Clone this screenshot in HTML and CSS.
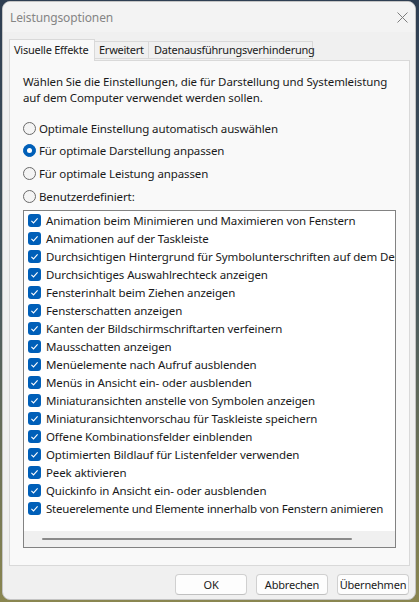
FILE: index.html
```html
<!DOCTYPE html>
<html lang="de">
<head>
<meta charset="utf-8">
<title>Leistungsoptionen</title>
<link rel="stylesheet" href="styles.css">
</head>
<body>
<div class="window">
  <div class="titlebar">
    <span class="title">Leistungsoptionen</span>
    <svg class="close" width="11" height="11" viewBox="0 0 11 11"><path d="M0.5 0.5 L10.5 10.5 M10.5 0.5 L0.5 10.5" stroke="#7d7d7d" stroke-width="1" fill="none"/></svg>
  </div>
  <div class="tabs">
    <div class="tab active">Visuelle Effekte</div>
    <div class="tab">Erweitert</div>
    <div class="tab">Datenausführungsverhinderung</div>
  </div>
  <div class="panel">
    <p class="desc">Wählen Sie die Einstellungen, die für Darstellung und Systemleistung<br>auf dem Computer verwendet werden sollen.</p>
    <div class="radios">
      <div class="radio-row"><span class="radio"></span>Optimale Einstellung automatisch auswählen</div>
      <div class="radio-row"><span class="radio on"></span>Für optimale Darstellung anpassen</div>
      <div class="radio-row"><span class="radio"></span>Für optimale Leistung anpassen</div>
      <div class="radio-row"><span class="radio"></span>Benutzerdefiniert:</div>
    </div>
    <div class="list">
      <div class="rows">
        <div class="row"><span class="cb"><svg width="13" height="13" viewBox="0 0 13 13"><path d="M3.4 6.9 L5.5 8.9 L9.6 4.4" stroke="#fff" stroke-width="1.1" fill="none"/></svg></span>Animation beim Minimieren und Maximieren von Fenstern</div>
        <div class="row"><span class="cb"><svg width="13" height="13" viewBox="0 0 13 13"><path d="M3.4 6.9 L5.5 8.9 L9.6 4.4" stroke="#fff" stroke-width="1.1" fill="none"/></svg></span>Animationen auf der Taskleiste</div>
        <div class="row"><span class="cb"><svg width="13" height="13" viewBox="0 0 13 13"><path d="M3.4 6.9 L5.5 8.9 L9.6 4.4" stroke="#fff" stroke-width="1.1" fill="none"/></svg></span>Durchsichtigen Hintergrund für Symbolunterschriften auf dem Desktop verwenden</div>
        <div class="row"><span class="cb"><svg width="13" height="13" viewBox="0 0 13 13"><path d="M3.4 6.9 L5.5 8.9 L9.6 4.4" stroke="#fff" stroke-width="1.1" fill="none"/></svg></span>Durchsichtiges Auswahlrechteck anzeigen</div>
        <div class="row"><span class="cb"><svg width="13" height="13" viewBox="0 0 13 13"><path d="M3.4 6.9 L5.5 8.9 L9.6 4.4" stroke="#fff" stroke-width="1.1" fill="none"/></svg></span>Fensterinhalt beim Ziehen anzeigen</div>
        <div class="row"><span class="cb"><svg width="13" height="13" viewBox="0 0 13 13"><path d="M3.4 6.9 L5.5 8.9 L9.6 4.4" stroke="#fff" stroke-width="1.1" fill="none"/></svg></span>Fensterschatten anzeigen</div>
        <div class="row"><span class="cb"><svg width="13" height="13" viewBox="0 0 13 13"><path d="M3.4 6.9 L5.5 8.9 L9.6 4.4" stroke="#fff" stroke-width="1.1" fill="none"/></svg></span>Kanten der Bildschirmschriftarten verfeinern</div>
        <div class="row"><span class="cb"><svg width="13" height="13" viewBox="0 0 13 13"><path d="M3.4 6.9 L5.5 8.9 L9.6 4.4" stroke="#fff" stroke-width="1.1" fill="none"/></svg></span>Mausschatten anzeigen</div>
        <div class="row"><span class="cb"><svg width="13" height="13" viewBox="0 0 13 13"><path d="M3.4 6.9 L5.5 8.9 L9.6 4.4" stroke="#fff" stroke-width="1.1" fill="none"/></svg></span>Menüelemente nach Aufruf ausblenden</div>
        <div class="row"><span class="cb"><svg width="13" height="13" viewBox="0 0 13 13"><path d="M3.4 6.9 L5.5 8.9 L9.6 4.4" stroke="#fff" stroke-width="1.1" fill="none"/></svg></span>Menüs in Ansicht ein- oder ausblenden</div>
        <div class="row"><span class="cb"><svg width="13" height="13" viewBox="0 0 13 13"><path d="M3.4 6.9 L5.5 8.9 L9.6 4.4" stroke="#fff" stroke-width="1.1" fill="none"/></svg></span>Miniaturansichten anstelle von Symbolen anzeigen</div>
        <div class="row"><span class="cb"><svg width="13" height="13" viewBox="0 0 13 13"><path d="M3.4 6.9 L5.5 8.9 L9.6 4.4" stroke="#fff" stroke-width="1.1" fill="none"/></svg></span>Miniaturansichtenvorschau für Taskleiste speichern</div>
        <div class="row"><span class="cb"><svg width="13" height="13" viewBox="0 0 13 13"><path d="M3.4 6.9 L5.5 8.9 L9.6 4.4" stroke="#fff" stroke-width="1.1" fill="none"/></svg></span>Offene Kombinationsfelder einblenden</div>
        <div class="row"><span class="cb"><svg width="13" height="13" viewBox="0 0 13 13"><path d="M3.4 6.9 L5.5 8.9 L9.6 4.4" stroke="#fff" stroke-width="1.1" fill="none"/></svg></span>Optimierten Bildlauf für Listenfelder verwenden</div>
        <div class="row"><span class="cb"><svg width="13" height="13" viewBox="0 0 13 13"><path d="M3.4 6.9 L5.5 8.9 L9.6 4.4" stroke="#fff" stroke-width="1.1" fill="none"/></svg></span>Peek aktivieren</div>
        <div class="row"><span class="cb"><svg width="13" height="13" viewBox="0 0 13 13"><path d="M3.4 6.9 L5.5 8.9 L9.6 4.4" stroke="#fff" stroke-width="1.1" fill="none"/></svg></span>Quickinfo in Ansicht ein- oder ausblenden</div>
        <div class="row"><span class="cb"><svg width="13" height="13" viewBox="0 0 13 13"><path d="M3.4 6.9 L5.5 8.9 L9.6 4.4" stroke="#fff" stroke-width="1.1" fill="none"/></svg></span>Steuerelemente und Elemente innerhalb von Fenstern animieren</div>
      </div>
      <div class="hscroll"><div class="thumb"></div></div>
    </div>
  </div>
  <div class="footer">
    <button class="btn">OK</button>
    <button class="btn">Abbrechen</button>
    <button class="btn">Übernehmen</button>
  </div>
</div>
</body>
</html>
```

FILE: styles.css
```css
* { box-sizing: border-box; }
html, body { margin: 0; padding: 0; }
body {
  width: 419px;
  height: 602px;
  overflow: hidden;
  background: linear-gradient(180deg, #2e3e52 0%, #4a5a5e 50%, #8a8650 100%);
  padding: 1px 3px 2px 2px;
  font-family: "Noto Sans", "Liberation Sans", sans-serif;
  font-size: 11.5px;
  letter-spacing: -0.12px;
  color: #1a1a1a;
}
.window {
  width: 414px;
  height: 599px;
  background: #f0f0f0;
  border: 1px solid #c4c4c4;
  border-radius: 8px;
  display: flex;
  flex-direction: column;
  overflow: hidden;
}
.titlebar {
  height: 30px;
  flex: none;
  display: flex;
  align-items: center;
  justify-content: space-between;
  padding: 0 7px 0 7px;
  background: #f3f3f3;
}
.title { color: #858585; font-size: 12px; }
.close { display: block; }
.tabs {
  margin-top: 6px;
  padding-left: 6px;
  display: flex;
  align-items: flex-end;
  height: 22px;
  position: relative;
  z-index: 1;
}
.tab {
  height: 18px;
  line-height: 16px;
  padding: 0 4px;
  border: 1px solid #d9d9d9;
  border-left: none;
  background: #f0f0f0;
  margin-bottom: 1px;
  white-space: nowrap;
  font-size: 11px;
  letter-spacing: -0.25px;
}
.tab.active {
  height: 22px;
  line-height: 20px;
  background: #f9f9f9;
  border-left: 1px solid #d9d9d9;
  border-bottom: none;
  margin-bottom: -1px;
  width: 86px;
  padding: 0 0 0 4px;
}
.tab:nth-child(2) { width: 54px; }
.tab:nth-child(3) { width: 164px; padding-left: 5px; }
.panel {
  margin: 0 5px 0 6px;
  height: 506px;
  background: #f9f9f9;
  border: 1px solid #d9d9d9;
  padding: 13px 13px 0 13px;
}
.desc {
  margin: 0;
  line-height: 16px;
  white-space: nowrap;
}
.radios { margin-top: 11px; }
.radio-row {
  height: 22.6px;
  display: flex;
  align-items: center;
  white-space: nowrap;
}
.radio {
  width: 13px;
  height: 13px;
  border-radius: 50%;
  border: 1px solid #6a6a6a;
  background: #f4f4f4;
  margin-right: 3px;
  flex: none;
  position: relative;
}
.radio.on {
  background: #005fb8;
  border-color: #005fb8;
}
.radio.on::after {
  content: "";
  position: absolute;
  left: 3px;
  top: 3px;
  width: 5px;
  height: 5px;
  border-radius: 50%;
  background: #fff;
}
.list {
  margin-top: 3px;
  height: 338px;
  background: #fff;
  border: 1px solid #828282;
  display: flex;
  flex-direction: column;
  overflow: hidden;
}
.rows { flex: 1; overflow: hidden; }
.row {
  height: 18px;
  display: flex;
  align-items: center;
  padding-left: 4px;
  white-space: nowrap;
}
.row:last-child { letter-spacing: -0.22px; }
.cb {
  width: 13px;
  height: 13px;
  border-radius: 3px;
  background: #005fb8;
  margin-right: 5px;
  flex: none;
  display: block;
}
.cb svg { display: block; }
.hscroll {
  height: 16px;
  flex: none;
  background: #f0f0f0;
  display: flex;
  align-items: center;
  padding-left: 18px;
}
.thumb {
  width: 310px;
  height: 2px;
  background: #8a8a8a;
  border-radius: 1px;
}
.footer {
  flex: 1;
  display: flex;
  justify-content: flex-end;
  align-items: flex-start;
  padding: 8px 6px 0 0;
  gap: 9px;
}
.btn {
  width: 72px;
  height: 21px;
  font-family: inherit;
  font-size: 11px;
  letter-spacing: -0.2px;
  color: #1a1a1a;
  background: #fdfdfd;
  border: 1px solid #d0d0d0;
  border-bottom-color: #c0c0c0;
  border-radius: 4px;
  padding: 0;
  line-height: 18px;
}
```
